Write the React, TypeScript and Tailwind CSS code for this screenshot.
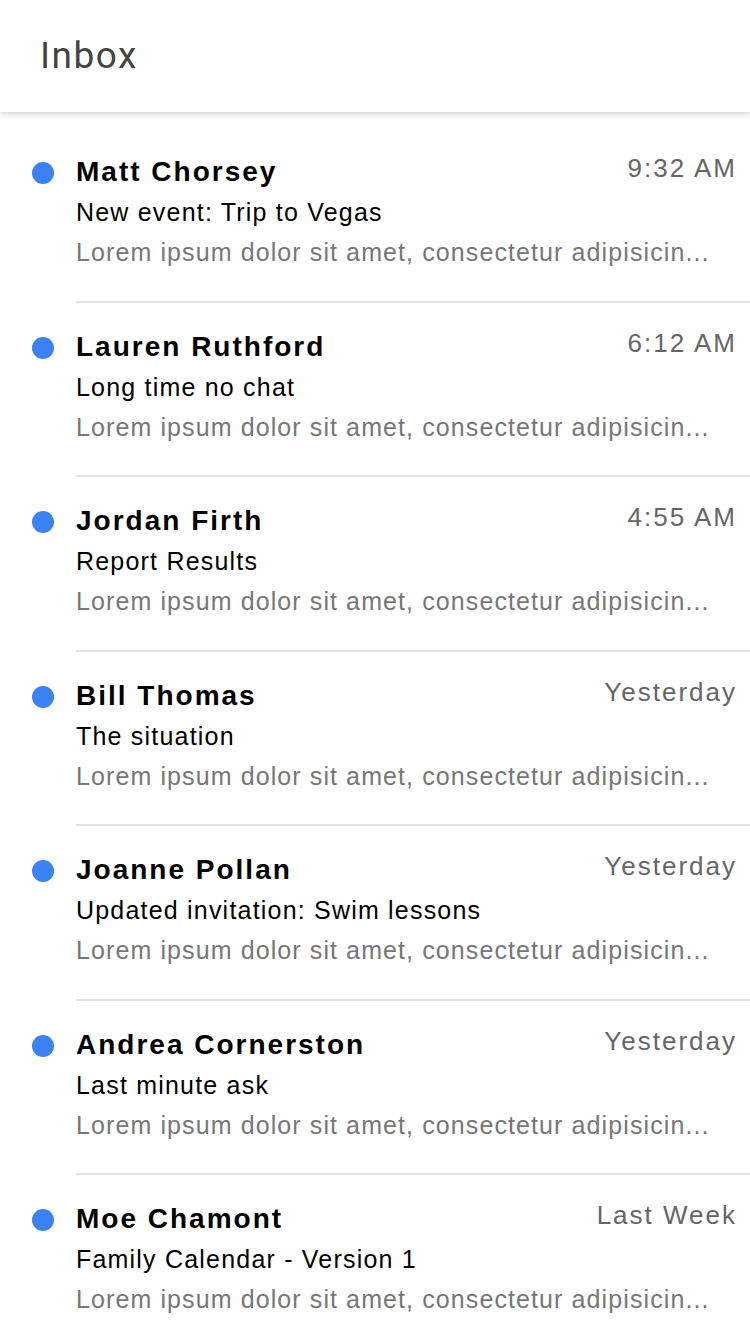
const messages = [
  { from: 'Matt Chorsey', subject: 'New event: Trip to Vegas', time: '9:32 AM' },
  { from: 'Lauren Ruthford', subject: 'Long time no chat', time: '6:12 AM' },
  { from: 'Jordan Firth', subject: 'Report Results', time: '4:55 AM' },
  { from: 'Bill Thomas', subject: 'The situation', time: 'Yesterday' },
  { from: 'Joanne Pollan', subject: 'Updated invitation: Swim lessons', time: 'Yesterday' },
  { from: 'Andrea Cornerston', subject: 'Last minute ask', time: 'Yesterday' },
  { from: 'Moe Chamont', subject: 'Family Calendar - Version 1', time: 'Last Week' },
]

const preview = 'Lorem ipsum dolor sit amet, consectetur adipisicin...'

export default function App() {
  return (
    <div className="min-h-screen bg-white font-['Liberation_Sans',Arial,sans-serif]">
      <header className="h-[112px] flex items-center px-10 bg-white shadow-[0_2px_6px_rgba(0,0,0,0.18)] relative z-10">
        <h1 className="text-[37px] leading-[44px] tracking-[1.5px] text-[#444] font-['Roboto',sans-serif]">Inbox</h1>
      </header>

      <main className="pt-[16px]">
        {messages.map((m) => (
          <div key={m.from} className="flex">
            <div className="w-[76px] shrink-0 pl-[32px] pt-[34px]">
              <div className="w-[22px] h-[22px] rounded-full bg-[#3b82f6]" />
            </div>
            <div className="flex-1 min-w-0 pt-[24px] pb-[28.5px] border-b-2 border-[#e2e2e2]">
              <div className="flex items-start justify-between pr-[13px]">
                <h2 className="text-[28px] leading-[40px] tracking-[2px] font-bold text-black">{m.from}</h2>
                <span className="text-[26px] leading-[32px] tracking-[2px] text-[#666]">{m.time}</span>
              </div>
              <h3 className="text-[25px] leading-[40px] tracking-[1.2px] text-black">{m.subject}</h3>
              <p className="text-[25px] leading-[40px] tracking-[1.1px] text-[#777] whitespace-nowrap">{preview}</p>
            </div>
          </div>
        ))}
      </main>
    </div>
  )
}
